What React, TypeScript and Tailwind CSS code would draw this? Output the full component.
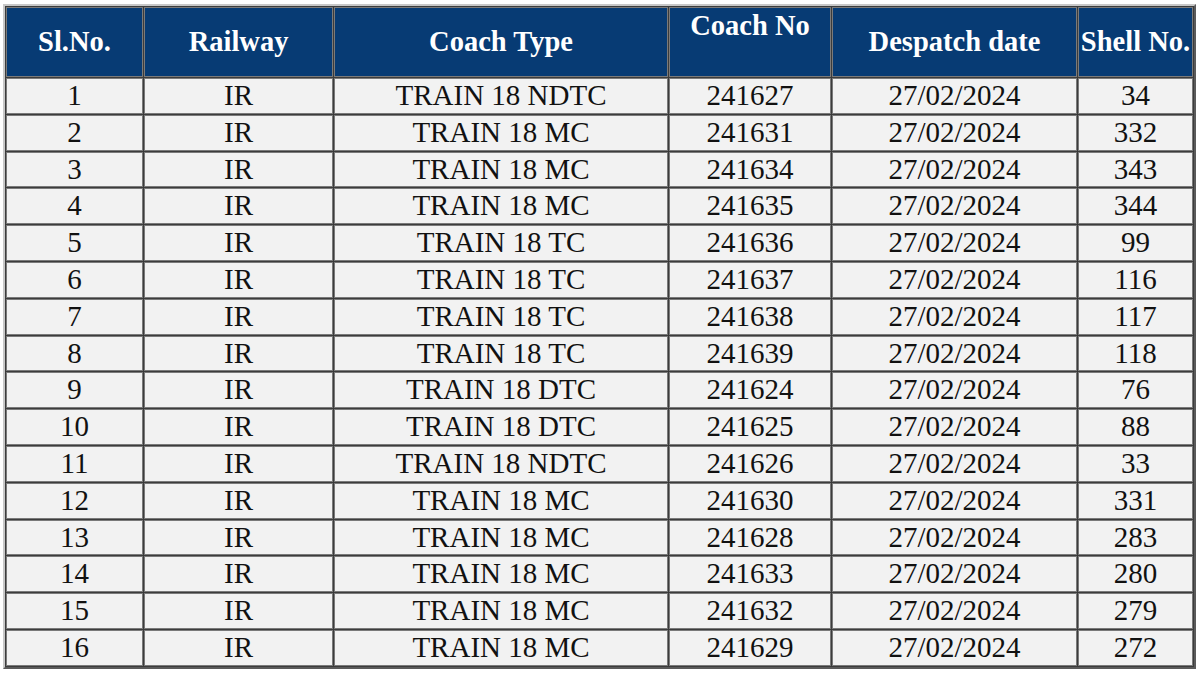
const rows: [string, string, string, string, string][] = [
  ["1", "TRAIN 18 NDTC", "241627", "27/02/2024", "34"],
  ["2", "TRAIN 18 MC", "241631", "27/02/2024", "332"],
  ["3", "TRAIN 18 MC", "241634", "27/02/2024", "343"],
  ["4", "TRAIN 18 MC", "241635", "27/02/2024", "344"],
  ["5", "TRAIN 18 TC", "241636", "27/02/2024", "99"],
  ["6", "TRAIN 18 TC", "241637", "27/02/2024", "116"],
  ["7", "TRAIN 18 TC", "241638", "27/02/2024", "117"],
  ["8", "TRAIN 18 TC", "241639", "27/02/2024", "118"],
  ["9", "TRAIN 18 DTC", "241624", "27/02/2024", "76"],
  ["10", "TRAIN 18 DTC", "241625", "27/02/2024", "88"],
  ["11", "TRAIN 18 NDTC", "241626", "27/02/2024", "33"],
  ["12", "TRAIN 18 MC", "241630", "27/02/2024", "331"],
  ["13", "TRAIN 18 MC", "241628", "27/02/2024", "283"],
  ["14", "TRAIN 18 MC", "241633", "27/02/2024", "280"],
  ["15", "TRAIN 18 MC", "241632", "27/02/2024", "279"],
  ["16", "TRAIN 18 MC", "241629", "27/02/2024", "272"],
];

const th =
  "border border-[#7a7a7a] bg-[#073b74] px-0 py-[2px] text-center align-middle text-[28.5px] font-bold leading-[32px] text-white";
const td =
  "border border-[#7a7a7a] bg-[#f2f2f2] p-0 py-[1px] text-center align-middle text-[29px] leading-[31.8px] text-[#111]";

export default function App() {
  return (
    <div className="h-[673px] w-[1200px] overflow-hidden bg-white pl-[3px] pt-[4px] font-['Liberation_Serif','Times_New_Roman',serif]">
      <table className="w-[1193px] table-fixed border-separate border-spacing-[1px] border-2 border-t-[#c8c8c8] border-l-[#c8c8c8] border-r-[#5a5a5a] border-b-[#5a5a5a] bg-[#3c3c3c]">
        <colgroup>
          <col className="w-[137px]" />
          <col className="w-[189px]" />
          <col className="w-[334px]" />
          <col className="w-[162px]" />
          <col className="w-[245px]" />
          <col />
        </colgroup>
        <thead>
          <tr>
            <th className={th}>Sl.No.</th>
            <th className={th}>Railway</th>
            <th className={th}>Coach Type</th>
            <th className={th}>
              Coach No
              <br />
              &nbsp;
            </th>
            <th className={th}>Despatch date</th>
            <th className={th}>Shell No.</th>
          </tr>
        </thead>
        <tbody>
          {rows.map(([sl, type, no, date, shell]) => (
            <tr key={sl}>
              <td className={td}>{sl}</td>
              <td className={td}>IR</td>
              <td className={td}>{type}</td>
              <td className={td}>{no}</td>
              <td className={td}>{date}</td>
              <td className={td}>{shell}</td>
            </tr>
          ))}
        </tbody>
      </table>
    </div>
  );
}
